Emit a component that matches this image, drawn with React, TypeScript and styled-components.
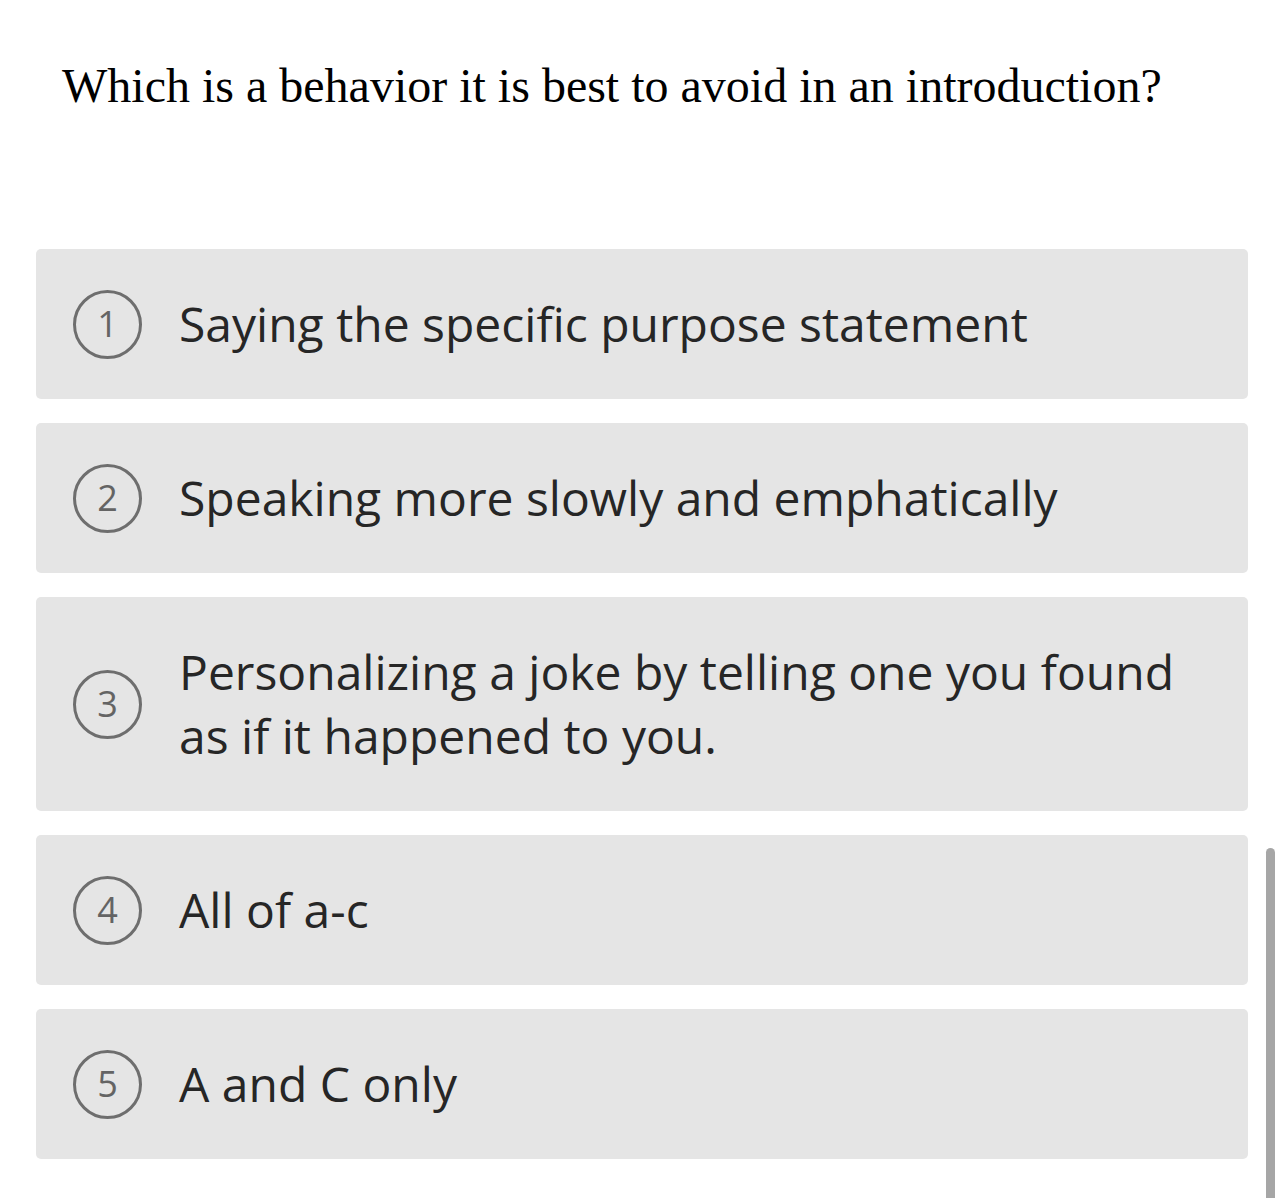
import React from "react";
import styled, { createGlobalStyle } from "styled-components";

const Global = createGlobalStyle`
  html, body { margin: 0; padding: 0; background: #ffffff; }
  body { overflow: hidden; }
`;

const Page = styled.div`
  width: 1280px;
  height: 1198px;
  box-sizing: border-box;
  padding: 0 32px 0 36px;
  position: relative;
  overflow: hidden;
`;

const Question = styled.h1`
  margin: 0;
  padding: 58px 0 0 26px;
  font-family: "Liberation Serif", "Times New Roman", serif;
  font-weight: 400;
  font-size: 48px;
  line-height: 56px;
  color: #000;
`;

const List = styled.div`
  display: flex;
  flex-direction: column;
  gap: 24px;
  margin-top: 135px;
`;

const Option = styled.div`
  display: flex;
  align-items: center;
  gap: 37px;
  background: #e5e5e5;
  border-radius: 5px;
  padding: 43px 40px 43px 37px;
`;

const Badge = styled.div`
  flex: none;
  box-sizing: border-box;
  width: 69px;
  height: 69px;
  margin: -3px 0;
  border: 3px solid #6e6e6e;
  border-radius: 50%;
  display: flex;
  align-items: center;
  justify-content: center;
  font-family: "Open Sans", sans-serif;
  font-size: 36px;
  line-height: 1;
  color: #646464;
`;

const Label = styled.div`
  font-family: "Open Sans", sans-serif;
  font-size: 48px;
  line-height: 64px;
  color: #262626;
`;

const Scrollbar = styled.div`
  position: absolute;
  left: 1266px;
  top: 848px;
  width: 9px;
  height: 400px;
  border-radius: 5px;
  background: #a6a6a6;
`;

const options = [
  "Saying the specific purpose statement",
  "Speaking more slowly and emphatically",
  "Personalizing a joke by telling one you found as if it happened to you.",
  "All of a-c",
  "A and C only",
];

export default function App() {
  return (
    <Page>
      <Global />
      <Question>Which is a behavior it is best to avoid in an introduction?</Question>
      <List>
        {options.map((o, i) => (
          <Option key={i}>
            <Badge>{i + 1}</Badge>
            <Label>{o}</Label>
          </Option>
        ))}
      </List>
      <Scrollbar />
    </Page>
  );
}
